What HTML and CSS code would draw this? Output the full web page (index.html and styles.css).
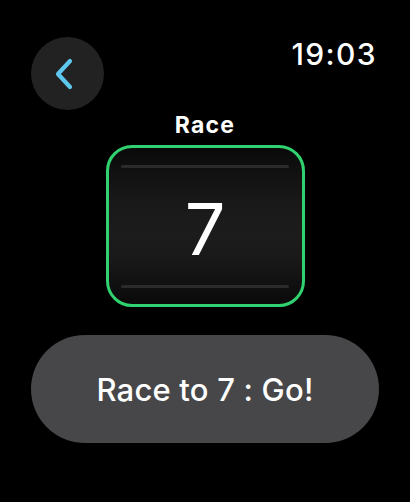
FILE: index.html
```html
<!DOCTYPE html>
<html>
<head>
<meta charset="utf-8">
<link rel="stylesheet" href="styles.css">
</head>
<body>
<div class="screen">
  <div class="header">
    <div class="back">
      <svg width="20" height="32" viewBox="0 0 20 32"><path d="M16 3 L4 16 L16 29" fill="none" stroke="#5ec7ee" stroke-width="4.2" stroke-linecap="round" stroke-linejoin="round"/></svg>
    </div>
    <div class="time">19:03</div>
  </div>
  <div class="title">Race</div>
  <div class="picker">
    <div class="rule"></div>
    <div class="value">7</div>
    <div class="rule"></div>
  </div>
  <div class="go">Race to 7 : Go!</div>
</div>
</body>
</html>
```
FILE: styles.css
```css
html, body {
  margin: 0;
  padding: 0;
  background: #000;
}
.screen {
  width: 410px;
  height: 502px;
  background: #000;
  color: #fff;
  font-family: Inter, "Noto Sans", sans-serif;
  display: flex;
  flex-direction: column;
  align-items: center;
  box-sizing: border-box;
  padding-top: 37px;
}
.header {
  width: 100%;
  box-sizing: border-box;
  padding: 0 33px 0 31px;
  display: flex;
  justify-content: space-between;
  align-items: flex-start;
}
.back {
  width: 73px;
  height: 73px;
  border-radius: 50%;
  background: #222222;
  display: flex;
  align-items: center;
  justify-content: center;
}
.back svg {
  margin-left: -8px;
}
.time {
  font-size: 30px;
  line-height: 30px;
  margin-top: 2px;
  font-weight: 500;
  letter-spacing: 1.4px;
}
.title {
  margin-top: 4px;
  font-size: 23px;
  line-height: 23px;
  font-weight: 700;
  letter-spacing: 1.2px;
}
.picker {
  margin-top: 8px;
  width: 199px;
  height: 162px;
  box-sizing: border-box;
  border: 3px solid #30d270;
  border-radius: 26px;
  background: linear-gradient(to bottom, #0a0a0a 0%, #19191a 35%, #1c1c1d 55%, #19191a 70%, #0a0a0a 100%);
  display: flex;
  flex-direction: column;
  align-items: center;
  justify-content: space-between;
  padding: 17px 12px 16px;
}
.rule {
  width: 168px;
  height: 3px;
  border-radius: 2px;
  background: #2b2b2c;
}
.value {
  font-size: 72px;
  line-height: 72px;
  font-weight: 400;
  margin-top: 4px;
}
.go {
  margin-top: 28px;
  width: 348px;
  height: 108px;
  border-radius: 54px;
  background: #474749;
  display: flex;
  align-items: center;
  justify-content: center;
  font-size: 31px;
  font-weight: 500;
  letter-spacing: 0.2px;
}
```
